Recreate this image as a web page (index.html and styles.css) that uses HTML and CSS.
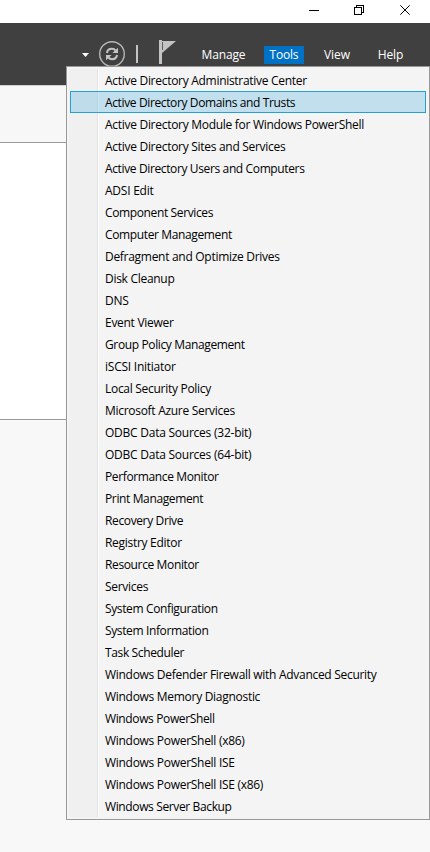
FILE: index.html
```html
<!DOCTYPE html>
<html lang="en">
<head>
<meta charset="utf-8">
<title>Server Manager</title>
<link rel="stylesheet" href="styles.css">
</head>
<body>
<div class="window">
  <div class="titlebar">
    <svg class="controls" width="130" height="23" viewBox="0 0 130 23" fill="none" stroke="#000" shape-rendering="crispEdges">
      <path d="M9 10.5h10"/>
      <path d="M54.5 7.5h7v7h-7zM56.5 7.5v-2h7v7h-2"/>
      <path d="M100.3 5.3l9.4 9.4M109.7 5.3l-9.4 9.4" shape-rendering="auto"/>
    </svg>
  </div>
  <header class="header">
    <svg class="tools-icons" width="110" height="32" viewBox="76 36 110 32" fill="none">
      <path d="M82 53h7l-3.5 4z" fill="#fff"/>
      <circle cx="112" cy="54" r="12.3" stroke="#b8b8b8" stroke-width="1.4"/>
      <path d="M107 53c.4-3 2.4-4.2 4.8-4.2 1.7 0 3 .6 3.8 1.8M117 55c-.4 3-2.4 4.2-4.8 4.2-1.7 0-3-.6-3.8-1.8" stroke="#c4c4c4" stroke-width="2"/>
      <path d="M118 47.8v5.2h-5.6zM106 60.2v-5.2h5.6z" fill="#c4c4c4"/>
      <path d="M136 45h2v18h-2z" fill="#c4c4c4"/>
      <path d="M159 40h3v24h-3z" fill="#c4c4c4"/>
      <path d="M162 41h14l-14 12z" fill="#c4c4c4"/>
      <path d="M162.5 42v8" stroke="#606060"/>
    </svg>
    <nav class="menubar">
      <span class="manage">Manage</span><span class="tools">Tools</span><span class="view">View</span><span class="help">Help</span>
    </nav>
  </header>
  <div class="toolbar"></div>
  <div class="pane"></div>
  <div class="footer"></div>
</div>
<ul class="menu">
  <li>Active Directory Administrative Center</li>
  <li class="selected tight">Active Directory Domains and Trusts</li>
  <li>Active Directory Module for Windows PowerShell</li>
  <li>Active Directory Sites and Services</li>
  <li class="tight">Active Directory Users and Computers</li>
  <li class="loose">ADSI Edit</li>
  <li class="tight">Component Services</li>
  <li class="tight">Computer Management</li>
  <li>Defragment and Optimize Drives</li>
  <li>Disk Cleanup</li>
  <li class="loose">DNS</li>
  <li>Event Viewer</li>
  <li class="tight">Group Policy Management</li>
  <li class="loose">iSCSI Initiator</li>
  <li>Local Security Policy</li>
  <li>Microsoft Azure Services</li>
  <li class="loose">ODBC Data Sources (32-bit)</li>
  <li class="loose">ODBC Data Sources (64-bit)</li>
  <li class="tight">Performance Monitor</li>
  <li class="tight">Print Management</li>
  <li class="tight">Recovery Drive</li>
  <li>Registry Editor</li>
  <li class="tight">Resource Monitor</li>
  <li>Services</li>
  <li class="tight">System Configuration</li>
  <li class="tight">System Information</li>
  <li class="tight">Task Scheduler</li>
  <li>Windows Defender Firewall with Advanced Security</li>
  <li>Windows Memory Diagnostic</li>
  <li class="tight">Windows PowerShell</li>
  <li>Windows PowerShell (x86)</li>
  <li>Windows PowerShell ISE</li>
  <li>Windows PowerShell ISE (x86)</li>
  <li class="tight">Windows Server Backup</li>
</ul>
</body>
</html>
```
FILE: styles.css
```css
* { box-sizing: border-box; }
body {
  margin: 0;
  width: 430px;
  height: 852px;
  overflow: hidden;
  position: relative;
  font: 12px/20px "Segoe UI", "Open Sans", sans-serif;
  color: #000;
}
.window { display: flex; flex-direction: column; height: 852px; }
.titlebar { height: 23px; background: #fff; display: flex; justify-content: flex-end; }
.controls { display: block; }
.header {
  height: 62px;
  background: #404040;
  display: flex;
  align-items: flex-start;
  padding: 13px 0 0 76px;
}
.tools-icons { display: block; flex: none; }
.menubar { display: flex; padding-top: 10px; line-height: 18px; color: #fff; }
.menubar span { height: 18px; text-align: center; white-space: nowrap; }
.manage { width: 74px; padding-left: 1px; letter-spacing: -0.15px; }
.tools { width: 40px; margin-left: 4px; background: #0072c6; letter-spacing: -0.2px; }
.view { width: 40px; margin-left: 13px; }
.help { width: 40px; margin-left: 13px; padding-left: 1px; letter-spacing: -0.15px; }
.toolbar { height: 58px; background: #f7f7f7; border-top: 1px solid #d0d0d0; border-bottom: 1px solid #999; }
.pane { height: 277px; background: #fff; border-bottom: 1px solid #999; }
.footer { flex: 1; background: #f8f8f8; }
.menu {
  position: absolute;
  left: 66px;
  top: 66px;
  width: 364px;
  height: 754px;
  margin: 0;
  padding: 2px 3px;
  list-style: none;
  border: 1px solid #999;
  background:
    linear-gradient(#f0f0f0, #f0f0f0) 2px 2px / 28px 748px no-repeat,
    linear-gradient(#e2e2e2, #e2e2e2) 30px 2px / 1px 748px no-repeat,
    linear-gradient(#fff, #fff) 31px 2px / 1px 748px no-repeat,
    #f4f4f4;
}
.menu li {
  height: 22px;
  padding: 1px 0 0 34px;
  border: 1px solid transparent;
  white-space: nowrap;
  letter-spacing: -0.29px;
}
.menu .tight { letter-spacing: -0.37px; }
.menu .loose { letter-spacing: -0.24px; }
.menu .selected { background: rgba(38, 160, 218, 0.24); border-color: #26a0da; }
```
